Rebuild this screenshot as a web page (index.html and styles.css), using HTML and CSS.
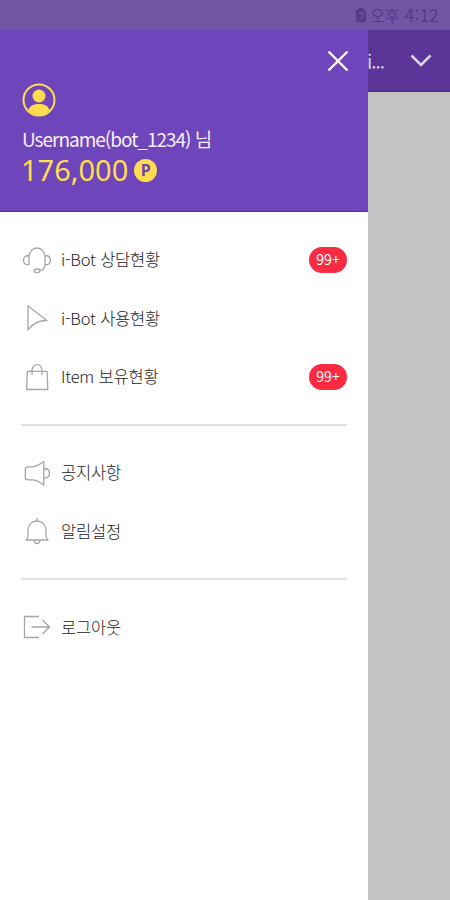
FILE: index.html
```html
<!DOCTYPE html>
<html lang="ko">
<head>
<meta charset="utf-8">
<title>i-Bot</title>
<link rel="stylesheet" href="styles.css">
</head>
<body>
<header class="status">
  <svg class="battery" width="10" height="14" viewBox="0 0 10 14"><path d="M3 0h4v1.500h1.500Q10 1.500 10 3v9.500Q10 14 8.500 14h-7Q0 14 0 12.500V3Q0 1.500 1.500 1.500H3z" fill="currentColor"/><path d="M3 5h4v3L5 11" fill="none" stroke="#7254a4" stroke-width="1.300"/></svg>
  <span class="clock"><span class="meridiem">오후</span> 4:12</span>
</header>
<div class="screen">
  <aside class="drawer">
    <section class="profile">
      <svg class="close" width="22" height="22" viewBox="0 0 22 22"><path d="M1.500 1.500l19 19M20.500 1.500l-19 19"/></svg>
      <svg class="avatar" width="34" height="34" viewBox="0 0 34 34"><circle cx="17" cy="17" r="15.500" fill="none" stroke="#ffdc4e" stroke-width="2"/><circle cx="17" cy="13" r="6.500" fill="#ffdc4e"/><path d="M6.500 27C8 22.500 12 21 17 21s9 1.500 10.500 6C25 30.300 21 32 17 32s-8-1.700-10.500-5z" fill="#ffdc4e"/></svg>
      <p class="username">Username(bot_1234) 님</p>
      <p class="points"><span class="amount">176,000</span><span class="coin">P</span></p>
    </section>
    <nav class="menu">
      <a class="item"><svg class="icon" viewBox="0 0 32 32"><path d="M8 20.500V13a8 9 0 0 1 16 0v6.500q0 6.500-5 7M8 11.500c-3 0-5.500 1-5.500 4.800S5 21 8 20.500M24 11.500c3 0 5.500 1 5.500 4.800S27 21 24 20.500"/><ellipse cx="16" cy="26.800" rx="3" ry="1.800"/></svg><span class="label">i-Bot 상담현황</span><span class="badge">99+</span></a>
      <a class="item"><svg class="icon" viewBox="0 0 32 32"><path d="M7 4l19 14.500c-8 0-14 2-19 9.500z"/></svg><span class="label">i-Bot 사용현황</span></a>
      <a class="item"><svg class="icon" viewBox="0 0 32 32"><path d="M6.300 10.300h19.800l.7 18.200H5.600zM11 14V9.500a5 5.800 0 0 1 10 0V14"/></svg><span class="label">Item 보유현황</span><span class="badge">99+</span></a>
    </nav>
    <hr class="rule">
    <nav class="menu">
      <a class="item"><svg class="icon" viewBox="0 0 32 32"><path d="M22.800 4.500V28C19 25 15 22.800 11 22.800H7Q4.300 22.800 4.300 20.500v-8Q4.300 9.800 7 9.800h4C15 9.800 19 7.500 22.800 4.500zM22.800 11.500q5.700 0 5.700 4.700t-5.700 5"/></svg><span class="label">공지사항</span></a>
      <a class="item"><svg class="icon" viewBox="0 0 32 32"><path d="M16 3v3M5 25q2-1.500 2-5v-5a9 9 0 0 1 18 0v5q0 3.500 2 5zM13 25.300q.5 3.200 3 3.200t3-3.200"/></svg><span class="label">알림설정</span></a>
    </nav>
    <hr class="rule">
    <nav class="menu">
      <a class="item"><svg class="icon" viewBox="0 0 32 32"><path d="M18 5.500H3.500v21H18M10.500 16H28.500M21.500 9l7 7-7 7"/></svg><span class="label">로그아웃</span></a>
    </nav>
  </aside>
  <main class="page">
    <div class="bar">
      <span class="title">i...</span>
      <svg class="chevron" width="22" height="13" viewBox="0 0 22 13"><path d="M1.500 1.500L11 11l9.500-9.500"/></svg>
    </div>
  </main>
</div>
</body>
</html>
```
FILE: styles.css
```css
* { box-sizing: border-box; }
body {
  margin: 0;
  height: 900px;
  overflow: hidden;
  display: flex;
  flex-direction: column;
  font-family: "Noto Sans CJK KR", "Noto Sans", sans-serif;
}
p { margin: 0; }
svg { flex: none; fill: none; }
.status {
  height: 30px;
  background: #7254a4;
  color: #55398a;
  display: flex;
  align-items: center;
  justify-content: flex-end;
  gap: 5px;
  padding-right: 11px;
}
.clock { font-size: 17px; line-height: 30px; letter-spacing: 0.3px; }
.meridiem { font-size: 15.5px; }
.screen { flex: 1; display: flex; }
.drawer { width: 368px; background: #fff; }
.profile {
  height: 182px;
  padding: 20px 19px 0 22px;
  background: #6e45bb;
  border-bottom: 1px solid #5d2fae;
  display: flex;
  flex-direction: column;
}
.close { align-self: flex-end; stroke: #fff; stroke-width: 2.4; }
.avatar { margin-top: 11px; }
.username {
  margin-top: 8px;
  height: 28px;
  line-height: 28px;
  font-size: 19px;
  letter-spacing: -1px;
  color: #f6efff;
  white-space: nowrap;
}
.points { display: flex; align-items: center; gap: 6px; height: 34px; color: #ffdc4e; }
.amount { font-size: 29px; line-height: 34px; letter-spacing: 0; margin: -1px 0 0 -1px; font-family: "Noto Sans", sans-serif; }
.coin {
  width: 23px;
  height: 23px;
  border-radius: 50%;
  background: #ffdc4e;
  color: #6e45bb;
  font: bold 16px/23px "Noto Sans", sans-serif;
  text-align: center;
}
.menu { padding: 0 21px; }
.profile + .menu { padding-top: 18.5px; }
.item { display: flex; align-items: center; height: 58.5px; }
.icon {
  width: 32px;
  height: 32px;
  stroke: #a6a6a6;
  stroke-width: 1.3;
  stroke-linejoin: round;
}
.label {
  margin: -1px 0 0 8px;
  font-size: 16.5px;
  font-weight: 300;
  line-height: 24px;
  letter-spacing: -0.2px;
  color: #222;
  white-space: nowrap;
}
.badge {
  margin-left: auto;
  width: 38px;
  height: 26px;
  border-radius: 13px;
  background: #f92b43;
  color: #fff;
  font-size: 14px;
  line-height: 25px;
  text-align: center;
}
.rule { margin: 17.5px 21px 18px; height: 2px; border: 0; background: #e2e2e2; }
.page { flex: 1; background: #c3c3c3; }
.bar {
  height: 62px;
  padding-right: 18px;
  background: #5a3597;
  border-bottom: 1px solid #4e2a8d;
  display: flex;
  align-items: center;
  justify-content: space-between;
}
.title { margin-left: -1px; font-size: 19px; line-height: 28px; letter-spacing: -1px; color: #d5cbe4; }
.chevron { stroke: #dcd3e8; stroke-width: 2.5; }
```
